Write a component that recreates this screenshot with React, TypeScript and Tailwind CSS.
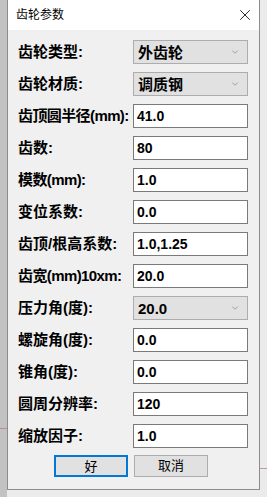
import { ChevronDown, X } from 'lucide-react';

type Row = {
  label: string;
  value: string;
  combo?: boolean;
  tight?: boolean;
};

const rows: Row[] = [
  { label: '齿轮类型:', value: '外齿轮', combo: true },
  { label: '齿轮材质:', value: '调质钢', combo: true },
  { label: '齿顶圆半径(mm):', value: '41.0', tight: true },
  { label: '齿数:', value: '80' },
  { label: '模数(mm):', value: '1.0', tight: true },
  { label: '变位系数:', value: '0.0' },
  { label: '齿顶/根高系数:', value: '1.0,1.25' },
  { label: '齿宽(mm)10xm:', value: '20.0', tight: true },
  { label: '压力角(度):', value: '20.0', combo: true },
  { label: '螺旋角(度):', value: '0.0' },
  { label: '锥角(度):', value: '0.0' },
  { label: '圆周分辨率:', value: '120' },
  { label: '缩放因子:', value: '1.0' },
];

const font = { fontFamily: '"Liberation Sans", "Noto Sans CJK SC", sans-serif' };

function Field({ row }: { row: Row }) {
  if (row.combo) {
    return (
      <div className="w-[115px] h-[24px] flex items-center justify-between pl-[4px] pr-[7px] bg-[#e1e1e1] border border-[#adadad]">
        <span className="text-[15px] font-bold text-black leading-none">{row.value}</span>
        <ChevronDown className="w-[10px] h-[10px] text-[#707070]" strokeWidth={1.4} />
      </div>
    );
  }
  return (
    <div className="w-[115px] h-[24px] flex items-center pl-[3px] bg-white border border-[#7a7a7a]">
      <span className="text-[14px] font-bold text-black leading-none">{row.value}</span>
    </div>
  );
}

export default function App() {
  return (
    <div className="relative w-[267px] h-[497px] flex bg-[#ebebeb] overflow-hidden" style={font}>
      <div className="w-[7px] h-full bg-[#c3c2c3]" />
      <div className="w-[253px] h-[490px] flex flex-col bg-[#f0f0f0] border-x border-b border-[#8c8c8c]">
        <div className="h-[30px] flex items-center justify-between pl-[8px] pr-[5px] bg-white">
          <span className="text-[12px] text-black">齿轮参数</span>
          <X className="w-[18px] h-[18px] text-black" strokeWidth={1.1} />
        </div>
        <div className="flex flex-col gap-[8px] pt-[10px] pl-[10px]">
          {rows.map((row) => (
            <div key={row.label} className="flex items-center">
              <span
                className={
                  row.tight
                    ? 'w-[115px] text-[15px] font-bold text-black whitespace-nowrap tracking-[-0.6px]'
                    : 'w-[115px] text-[15px] font-bold text-black whitespace-nowrap'
                }
              >
                {row.label}
              </span>
              <Field row={row} />
            </div>
          ))}
        </div>
        <div className="flex gap-[6px] pt-[7px] pl-[46px]">
          <button className="w-[74px] h-[22px] text-[13px] text-black bg-[#e1e1e1] border-2 border-[#0078d7]">
            好
          </button>
          <button className="w-[74px] h-[22px] text-[13px] text-black bg-[#e1e1e1] border border-[#adadad]">
            取消
          </button>
        </div>
      </div>
      <div className="absolute left-0 top-[428px] w-[7px] h-[1px] bg-[#b89090]" />
      <div className="absolute left-[260px] top-[468px] w-[7px] h-[1px] bg-[#c49a9a]" />
    </div>
  );
}
